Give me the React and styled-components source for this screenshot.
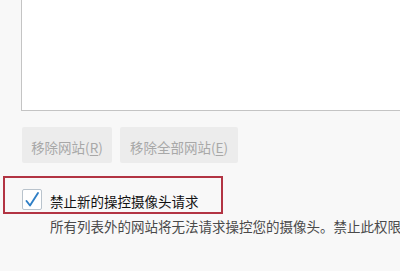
import React from "react";
import styled, { createGlobalStyle } from "styled-components";

const GlobalStyle = createGlobalStyle`
  html, body {
    margin: 0;
    padding: 0;
    background: #f8f8f8;
  }
  body {
    font-family: "Noto Sans CJK SC", "Noto Sans", "Liberation Sans", sans-serif;
  }
`;

const Page = styled.div`
  width: 400px;
  height: 271px;
  overflow: hidden;
  padding-left: 21px;
  box-sizing: border-box;
`;

const SiteList = styled.div`
  width: 420px;
  height: 111px;
  box-sizing: border-box;
  background: #fff;
  border: 1px solid #c4c4c4;
  border-top: none;
  border-right: none;
`;

const ButtonRow = styled.div`
  display: flex;
  gap: 8px;
  margin-top: 16px;
  padding-left: 1px;
`;

const Button = styled.button`
  height: 36px;
  width: ${(p) => p.$width}px;
  padding: 3px 0 0;
  border: none;
  border-radius: 2px;
  background: #ececec;
  color: #a8a8a8;
  font-family: inherit;
  font-size: 13.5px;
  cursor: default;

  u {
    text-underline-offset: 2px;
  }
`;

const CheckRow = styled.label`
  position: relative;
  display: flex;
  align-items: center;
  gap: 8px;
  height: 22px;
  margin-top: 25px;
  padding-left: 1px;
`;

// annotation frame drawn over the option
const Highlight = styled.div`
  position: absolute;
  top: -12px;
  left: -18px;
  width: 220px;
  height: 38px;
  box-sizing: border-box;
  border: 2px solid #b23443;
  pointer-events: none;
`;

const Box = styled.span`
  display: flex;
  align-items: center;
  justify-content: center;
  width: 20px;
  height: 21px;
  box-sizing: border-box;
  background: #fff;
  border: 1px solid #b9c3cc;
  border-radius: 2px;
`;

const Label = styled.span`
  font-size: 13.5px;
  line-height: 22px;
  padding-top: 4px;
  color: #111;
  white-space: nowrap;
`;

const Description = styled.p`
  margin: 7px 0 0 29px;
  font-size: 13.5px;
  line-height: 18px;
  color: #4a4a4a;
  white-space: nowrap;
`;

const CheckMark = () => (
  <svg width="16" height="17" viewBox="0 0 16 17">
    <path
      d="M2.5 10 L6 14.5 L14 2"
      fill="none"
      stroke="#2f7fc6"
      strokeWidth="1.9"
      strokeLinecap="round"
      strokeLinejoin="round"
    />
  </svg>
);

export default function App() {
  return (
    <>
      <GlobalStyle />
      <Page>
        <SiteList />
        <ButtonRow>
          <Button $width={90}>
            移除网站(<u>R</u>)
          </Button>
          <Button $width={118}>
            移除全部网站(<u>E</u>)
          </Button>
        </ButtonRow>
        <CheckRow>
          <Highlight />
          <Box>
            <CheckMark />
          </Box>
          <Label>禁止新的操控摄像头请求</Label>
        </CheckRow>
        <Description>
          所有列表外的网站将无法请求操控您的摄像头。禁止此权限
        </Description>
      </Page>
    </>
  );
}
